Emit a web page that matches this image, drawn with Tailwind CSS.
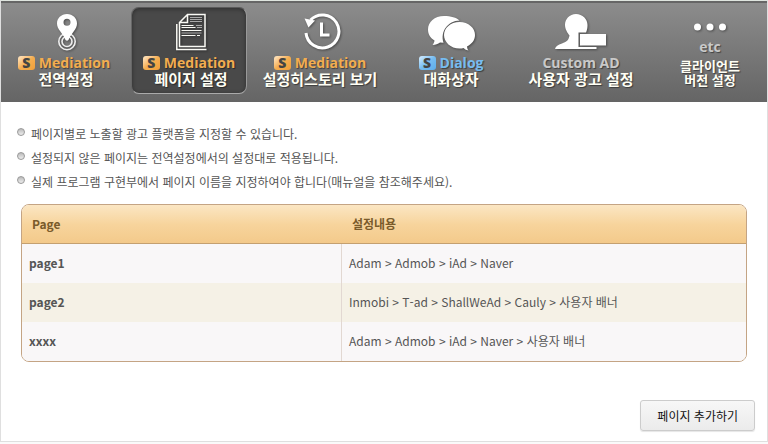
<!DOCTYPE html>
<html lang="ko">
<head>
<meta charset="utf-8">
<meta name="viewport" content="width=device-width, initial-scale=1">
<title>페이지 설정</title>
<script src="https://cdn.jsdelivr.net/npm/@tailwindcss/browser@4"></script>
</head>
<body class="bg-[#fafafa] font-['Noto_Sans_CJK_KR',sans-serif] text-xs text-[#555]">
<div class="border-x border-b border-[#dfdfdf] bg-white">
  <header class="border-t border-[#dfe5df]">
    <nav aria-label="주 메뉴" class="grid grid-cols-[126fr_124fr_138fr_124fr_136fr_118fr] border-t-2 border-[#666] bg-linear-to-b from-[#8c8c8c] to-[#656565] text-center text-[15px] leading-4 font-bold text-[#fffff5] text-shadow-[1px_1px_1px_rgb(0_0_0/0.45)]">
      <a href="#" class="flex h-[99px] flex-col items-center pt-2">
        <svg class="h-11 w-10 drop-shadow-[1px_1px_1px_rgb(0_0_0/0.4)]" viewBox="0 0 40 44" fill="none" aria-hidden="true">
          <circle cx="23" cy="30.500" r="8.2" stroke="#eee" stroke-width="1.6"/><circle cx="23" cy="30.500" r="5" stroke="#eee" stroke-width="1.6"/>
          <path fill="#fff" fill-rule="evenodd" d="M23 3c-5.800 0-10 4.300-10 9.500 0 3 1.300 5 3 7.500 2.500 3.500 4.500 6 5.500 9q1.500 1.500 3 0c1-3 3-5.500 5.500-9 1.700-2.500 3-4.500 3-7.500C33 7.300 28.800 3 23 3Zm0 4.800a3.500 3.500 0 1 1 0 7 3.500 3.500 0 0 1 0-7Z"/>
        </svg>
        <span class="flex items-center gap-1 font-['Open_Sans',sans-serif] text-sm leading-4 text-[#f2ad50]"><span class="flex h-3.5 w-[17px] items-center justify-center rounded-[3px] bg-linear-to-br from-[#ffe9c8] via-[#f5ae50] to-[#ef9f39] text-sm leading-none font-extrabold text-[#444] text-shadow-none">S</span>Mediation</span>
        <span class="pl-1">전역설정</span>
      </a>
      <a href="#" aria-current="page" class="mx-1 my-1 flex h-[87px] flex-col items-center rounded-lg border border-t-[#5b5b5b] border-r-[#999] border-b-[#aaa] border-l-[#666] bg-[#494949] pt-[3px] shadow-[inset_0_1px_4px_rgb(0_0_0/0.4)]">
        <svg class="h-11 w-10 drop-shadow-[1px_1px_1px_rgb(0_0_0/0.4)]" viewBox="0 0 40 44" fill="none" stroke="#fafaf5" aria-hidden="true">
          <path stroke-width="1.500" d="M10.500 11.500 18.500 3.500H36V35.500H10.500ZM10.500 11.500H18.500V3.500"/>
          <path stroke-width="1.500" d="M7.800 13V38.500H37.500"/>
          <path stroke="#aaa" d="M21 6.500h12M21 8.500h12M21 10.500h12"/>
          <path d="M12.500 14.500h12M12.500 16.500h14M12.500 19.500h20M12.500 24.500h14M28 24.500h3"/>
          <path stroke="#aaa" d="M27 14.500h6M28 16.500h5M12.500 22h20"/>
        </svg>
        <span class="flex items-center gap-1 font-['Open_Sans',sans-serif] text-sm leading-4 text-[#f2ad50]"><span class="flex h-3.5 w-[17px] items-center justify-center rounded-[3px] bg-linear-to-br from-[#ffe9c8] via-[#f5ae50] to-[#ef9f39] text-sm leading-none font-extrabold text-[#444] text-shadow-none">S</span>Mediation</span>
        <span class="pl-1">페이지 설정</span>
      </a>
      <a href="#" class="flex h-[99px] flex-col items-center pt-2">
        <svg class="h-11 w-11 drop-shadow-[1px_1px_1px_rgb(0_0_0/0.4)]" viewBox="0 0 44 44" fill="none" stroke="#fff" aria-hidden="true">
          <path stroke-width="3" d="M12.500 9A16.500 16.500 0 1 1 8 22"/>
          <path stroke-width="3" d="M23.500 11.500V24H31.500"/>
          <path fill="#fff" stroke="none" d="M6.500 7.500 17 9.500 10.500 16.500Z"/>
        </svg>
        <span class="flex items-center gap-1 font-['Open_Sans',sans-serif] text-sm leading-4 text-[#f2ad50]"><span class="flex h-3.5 w-[17px] items-center justify-center rounded-[3px] bg-linear-to-br from-[#ffe9c8] via-[#f5ae50] to-[#ef9f39] text-sm leading-none font-extrabold text-[#444] text-shadow-none">S</span>Mediation</span>
        <span>설정히스토리 보기</span>
      </a>
      <a href="#" class="flex h-[99px] flex-col items-center pt-2">
        <svg class="h-11 w-[50px] drop-shadow-[1px_1px_1px_rgb(0_0_0/0.4)]" viewBox="0 0 50 44" fill="#fff" aria-hidden="true">
          <path d="M18 5C8.500 5 2 11 2 18.500c0 5 2.500 8.500 6.500 11-.2 1.800-.8 3-2 4.500 3 0 5.500-1 7.500-2.500l3.500.3C14 20 22 10 33.500 9.500 30.500 6.500 25 5 18 5Z"/>
          <path d="M33.500 11C24.500 11 18 17 18 24s6.500 13.500 15.500 13.500q2.500 0 4-.5 2 2 5 2.500-1.500-2-1.500-4C46 33 49 29 49 24c0-7-6.500-13-15.500-13Z"/>
        </svg>
        <span class="flex items-center gap-1 font-['Open_Sans',sans-serif] text-sm leading-4 text-[#76bcf0]"><span class="flex h-3.5 w-[17px] items-center justify-center rounded-[3px] bg-linear-to-br from-[#d8efff] via-[#76bcf0] to-[#5dade9] text-sm leading-none font-extrabold text-[#444] text-shadow-none">S</span>Dialog</span>
        <span>대화상자</span>
      </a>
      <a href="#" class="flex h-[99px] flex-col items-center pt-2">
        <svg class="h-11 w-[54px] drop-shadow-[1px_1px_1px_rgb(0_0_0/0.4)]" viewBox="0 0 54 44" fill="#fff" aria-hidden="true">
          <path d="M22 3C15.500 3 11 8 11 14c0 4 2.500 8 4.500 10.500-1 5.500-3 6-7.500 8-4 1.300-6.500 3-7 5.500H42.500V36H24.500V21.500h7.500c1-2.500 1.500-4.500 1.500-7.500C33.500 8 28.500 3 22 3Z"/>
          <path d="M26 23H52V34.500H26Z"/>
        </svg>
        <span class="font-['Open_Sans',sans-serif] text-sm leading-4 text-[#c9c9c9]">Custom AD</span>
        <span>사용자 광고 설정</span>
      </a>
      <a href="#" class="flex h-[99px] flex-col items-center pt-2 pl-1">
        <svg class="h-7 w-10 drop-shadow-[1px_1px_1px_rgb(0_0_0/0.4)]" viewBox="0 0 40 28" fill="#fff" aria-hidden="true">
          <circle cx="7.500" cy="16" r="3.500"/><circle cx="20" cy="16" r="3.500"/><circle cx="32.500" cy="16" r="3.500"/>
        </svg>
        <span class="font-['Open_Sans',sans-serif] text-sm leading-4 text-[#c9c9c9]">etc</span>
        <span class="pt-1 text-[13px] leading-[14px]">클라이언트<br>버전 설정</span>
      </a>
    </nav>
  </header>
  <main class="px-3 pt-5 pb-[10px]">
    <ul class="flex flex-col px-1 leading-6">
      <li class="flex items-start gap-1.5"><span class="mt-1.5 size-2 rounded-full border border-[#999] bg-linear-to-b from-[#bbb] to-[#eee]"></span>페이지별로 노출할 광고 플랫폼을 지정할 수 있습니다.</li>
      <li class="flex items-start gap-1.5"><span class="mt-1.5 size-2 rounded-full border border-[#999] bg-linear-to-b from-[#bbb] to-[#eee]"></span>설정되지 않은 페이지는 전역설정에서의 설정대로 적용됩니다.</li>
      <li class="flex items-start gap-1.5"><span class="mt-1.5 size-2 rounded-full border border-[#999] bg-linear-to-b from-[#bbb] to-[#eee]"></span>실제 프로그램 구현부에서 페이지 이름을 지정하여야 합니다(매뉴얼을 참조해주세요).</li>
    </ul>
    <div class="mx-2 mt-2.5 overflow-hidden rounded-lg border border-[#c4a484]">
      <table class="w-full table-fixed border-separate border-spacing-0 text-left">
        <thead class="bg-linear-to-b from-[#fbe6c3] via-[#f7d49c] to-[#f3c98a] text-[#7a5b2b]">
          <tr class="h-[39px]"><th scope="col" class="w-80 border-b border-[#c4a070] pl-2.5">Page</th><th scope="col" class="border-b border-[#c4a070] pl-2.5">설정내용</th></tr>
        </thead>
        <tbody>
          <tr class="h-[39px] bg-[#f9f7f8]"><th scope="row" class="border-r border-[#e2d8d2] pb-0.5 pl-[7px]">page1</th><td class="pb-0.5 pl-[7px]">Adam &gt; Admob &gt; iAd &gt; Naver</td></tr>
          <tr class="h-[39px] bg-[#f5f1e6]"><th scope="row" class="border-r border-[#e2d8d2] pb-0.5 pl-[7px]">page2</th><td class="pb-0.5 pl-[7px]">Inmobi &gt; T-ad &gt; ShallWeAd &gt; Cauly &gt; 사용자 배너</td></tr>
          <tr class="h-[39px] bg-[#f9f7f8]"><th scope="row" class="border-r border-[#e2d8d2] pb-0.5 pl-[7px]">xxxx</th><td class="pb-0.5 pl-[7px]">Adam &gt; Admob &gt; iAd &gt; Naver &gt; 사용자 배너</td></tr>
        </tbody>
      </table>
    </div>
    <div class="mt-[38px] flex justify-end">
      <button type="button" class="h-[31px] rounded-[3px] border border-[#ccc] bg-linear-to-b from-[#f7f7f7] to-[#ebebeb] px-4 text-[#111] shadow-[0_1px_1px_rgb(0_0_0/0.1)]">페이지 추가하기</button>
    </div>
  </main>
</div>
</body>
</html>
